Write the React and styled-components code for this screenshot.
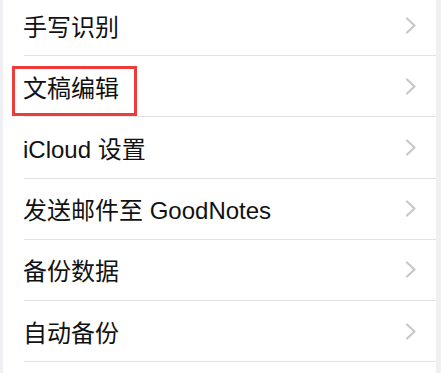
import React from "react";
import styled, { createGlobalStyle } from "styled-components";

const GlobalStyle = createGlobalStyle`
  html, body {
    margin: 0;
    padding: 0;
    background: #efeff4;
    overflow: hidden;
  }
`;

const Page = styled.div`
  height: 373px;
  overflow: hidden;
  padding: 0 5px 0 3px;
`;

const List = styled.div`
  background: #ffffff;
  margin-top: -5px;
  padding-left: 21px;
  height: 400px;
`;

const Row = styled.div`
  position: relative;
  display: flex;
  align-items: center;
  justify-content: space-between;
  height: 61.2px;
  box-sizing: border-box;
  padding-right: 19px;
  border-bottom: 1px solid #e3e3e6;
`;

const Label = styled.span`
  margin-left: -1px;
  font-family: "Liberation Sans", "Noto Sans CJK SC", sans-serif;
  font-size: 24px;
  color: #111111;
`;

const Highlight = styled.div`
  position: absolute;
  left: -12px;
  top: 10px;
  width: 125px;
  height: 50px;
  box-sizing: border-box;
  border: 3px solid #ee3b3b;
  pointer-events: none;
`;

const Chevron = () => (
  <svg width="12" height="17" viewBox="0 0 12 17">
    <path
      d="M2 1.5 L9.5 8.5 L2 15.5"
      fill="none"
      stroke="#c7c7cc"
      strokeWidth="2.2"
      strokeLinecap="round"
      strokeLinejoin="round"
    />
  </svg>
);

const items = [
  { label: "手写识别" },
  { label: "文稿编辑", marked: true },
  { label: "iCloud 设置" },
  { label: "发送邮件至 GoodNotes" },
  { label: "备份数据" },
  { label: "自动备份" },
];

export default function App() {
  return (
    <>
      <GlobalStyle />
      <Page>
        <List>
          {items.map((item) => (
            <Row key={item.label}>
              <Label>{item.label}</Label>
              <Chevron />
              {item.marked && <Highlight />}
            </Row>
          ))}
        </List>
      </Page>
    </>
  );
}
